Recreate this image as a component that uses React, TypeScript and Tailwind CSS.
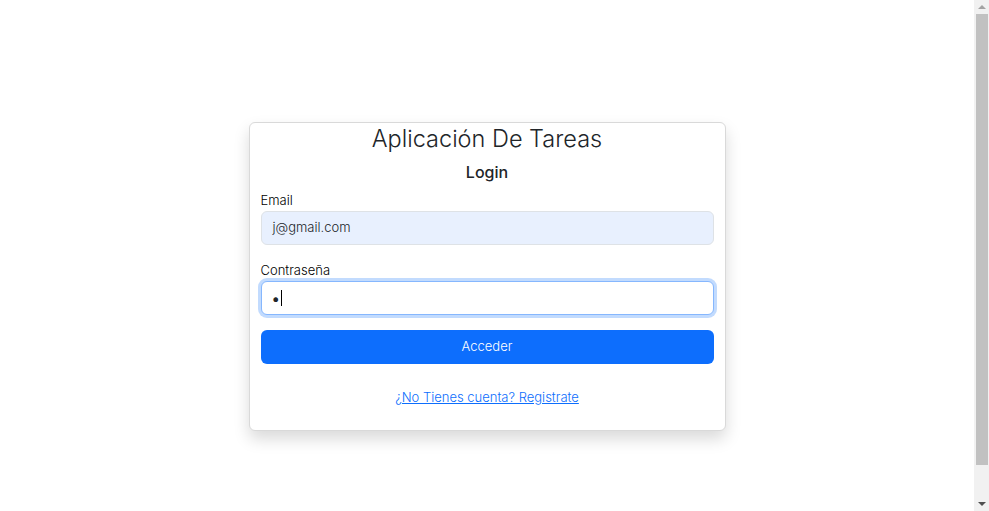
import React from "react";

export default function App() {
  return (
    <div
      className="flex h-[511px] w-full overflow-hidden bg-white text-[#212529]"
      style={{ fontFamily: "Inter, 'Noto Sans', sans-serif" }}
    >
      <div className="flex flex-1 justify-center pt-[122px]">
        <div className="h-fit w-[477px] rounded-[6px] border border-[#d9d9d9] bg-white px-[11px] pb-[22px] shadow-[0_8px_16px_rgba(0,0,0,0.15)]">
          <h1 className="pt-[1px] text-center text-[23.5px] font-light leading-[30px]">Aplicación De Tareas</h1>
          <h5 className="mt-[6px] text-center text-[16px] font-medium leading-[24px]">Login</h5>
          <div className="mt-[6px]">
            <label className="block text-[13px] font-light leading-[20px] text-black">Email</label>
            <div className="mt-[1px] flex h-[34px] items-center rounded-[6px] border border-[#dee2e6] bg-[#e8f0fe] px-[11px] text-[13px] font-light">
              j@gmail.com
            </div>
          </div>
          <div className="mt-[15px]">
            <label className="block text-[13px] font-light leading-[20px] text-black">Contraseña</label>
            <div className="mt-[1px] flex h-[34px] items-center rounded-[6px] border border-[#86b7fe] bg-white px-[10px] text-[14px] shadow-[0_0_0_3px_rgba(13,110,253,0.25)]">
              <span className="text-[15px] leading-none">•</span>
              <span className="ml-[1px] inline-block h-[16px] w-[1px] bg-black" />
            </div>
          </div>
          <button className="mt-[15px] flex h-[34px] w-full items-center justify-center rounded-[6px] bg-[#0d6efd] text-[13px] font-light text-white">
            Acceder
          </button>
          <div className="mt-[20px] text-center">
            <a href="#" className="text-[13px] font-light text-[#0d6efd] underline">
              ¿No Tienes cuenta? Registrate
            </a>
          </div>
        </div>
      </div>
      <div className="flex h-full w-[15px] flex-col items-center bg-[#f1f1f1]">
        <div className="flex h-[14px] items-center justify-center">
          <div className="h-0 w-0 border-x-[4px] border-b-[4px] border-x-transparent border-b-[#a3a3a3]" />
        </div>
        <div className="h-[451px] w-[12px] bg-[#c1c1c1]" />
        <div className="flex-1" />
        <div className="flex h-[14px] items-center justify-center">
          <div className="h-0 w-0 border-x-[4px] border-t-[4px] border-x-transparent border-t-[#505050]" />
        </div>
      </div>
    </div>
  );
}
